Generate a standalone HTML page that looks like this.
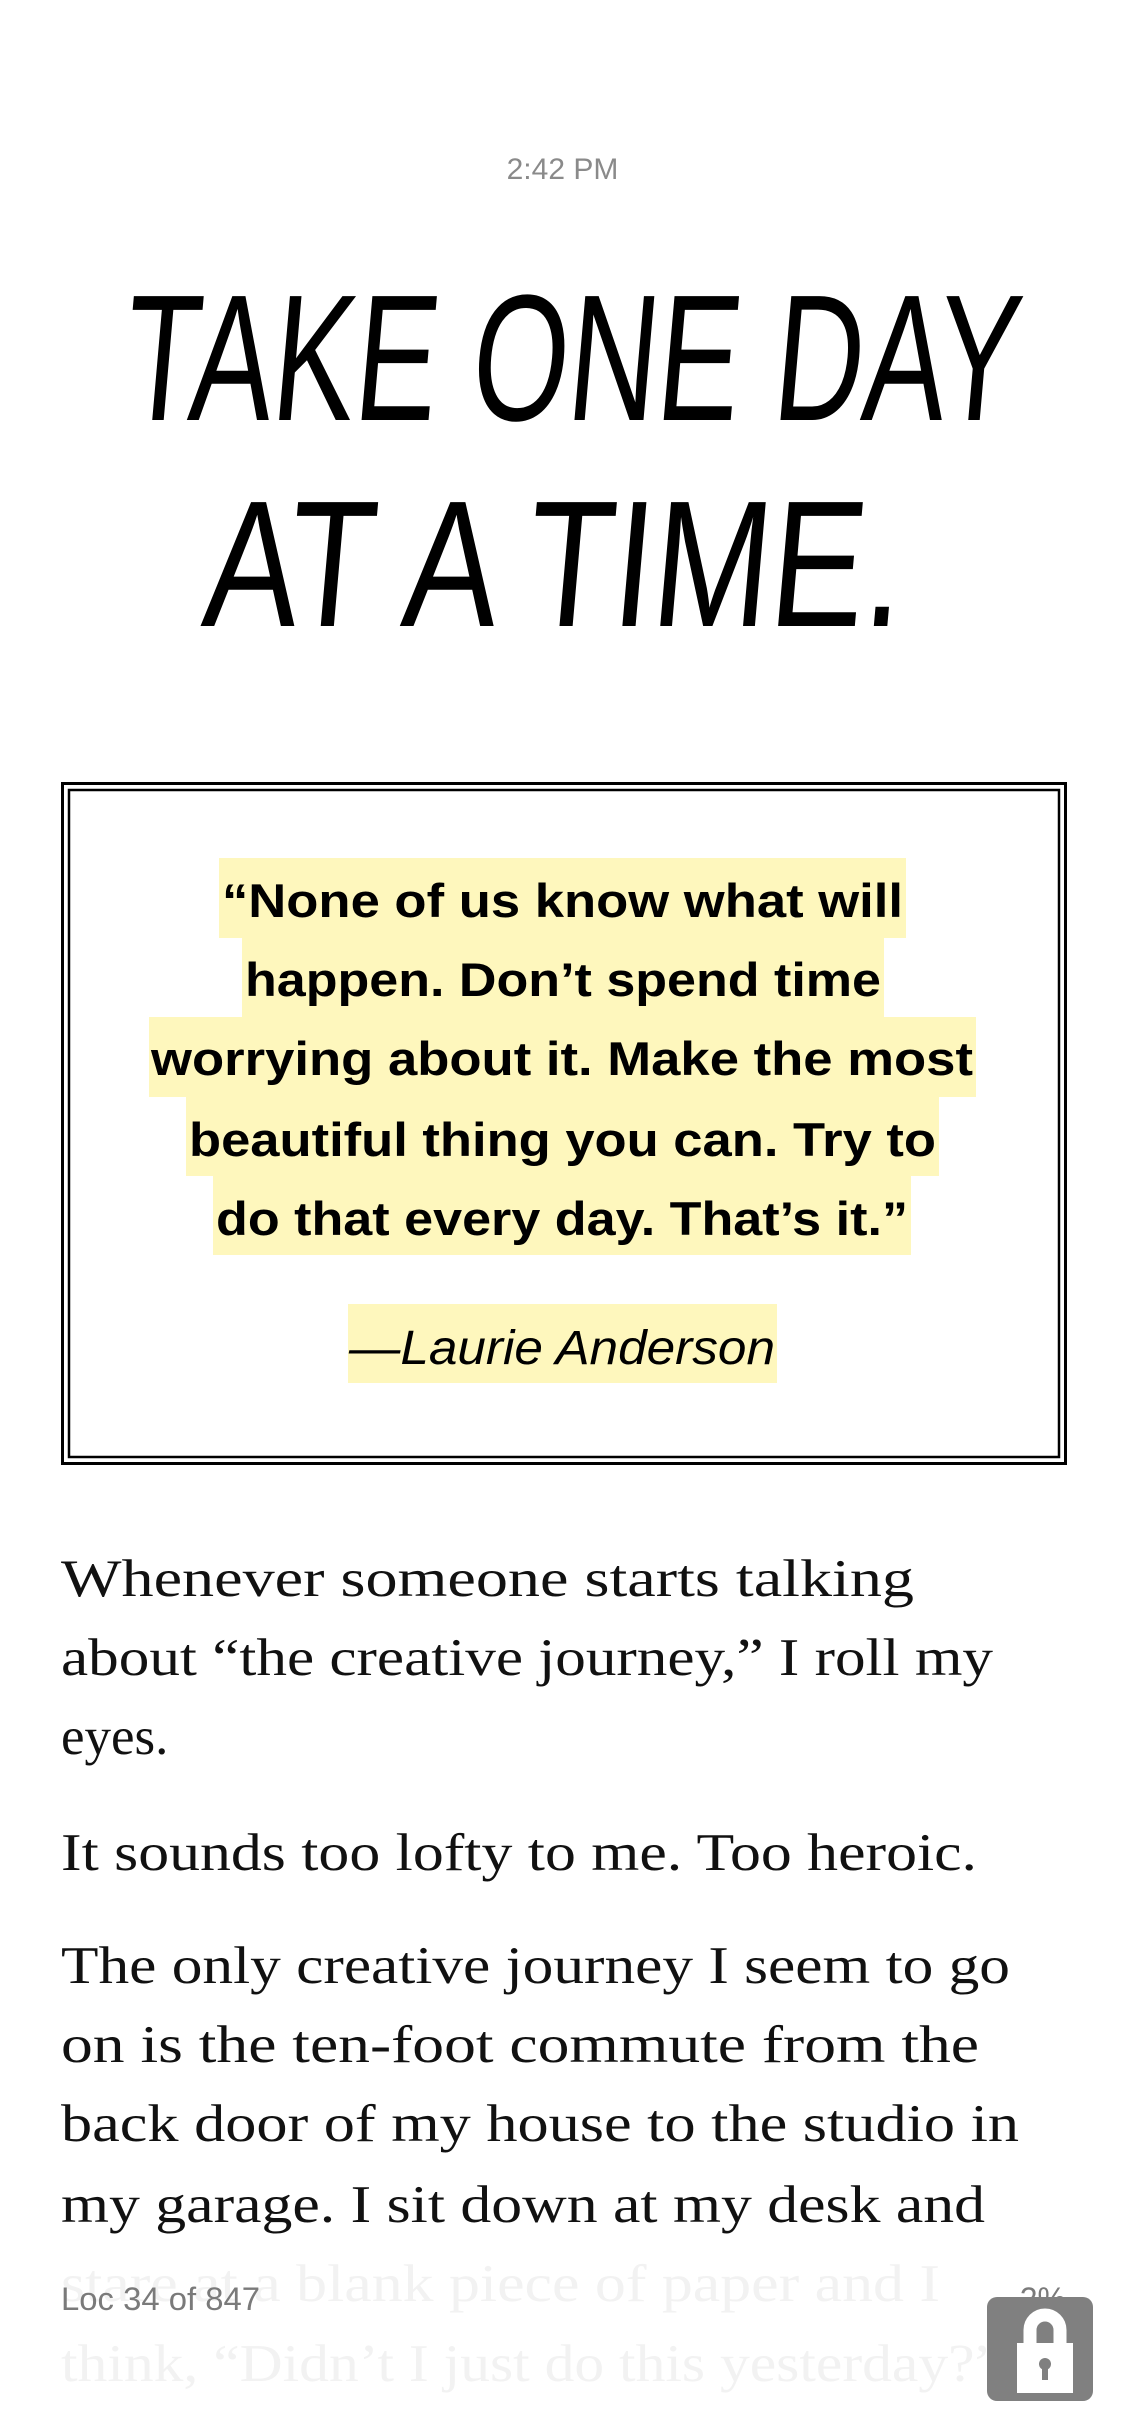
<!DOCTYPE html>
<html><head><meta charset="utf-8"><style>
html,body{margin:0;padding:0;background:#fff;width:1125px;height:2436px;overflow:hidden}
svg{display:block}
</style></head><body>
<svg width="1125" height="2436" viewBox="0 0 1125 2436" xmlns="http://www.w3.org/2000/svg">
<rect width="1125" height="2436" fill="#fff"/>
<text x="562.5" y="179" text-anchor="middle" font-family="Liberation Sans, sans-serif" font-size="30" fill="#8a8a8a">2:42 PM</text>

<g font-family="Liberation Sans Narrow, Liberation Sans, sans-serif" font-size="180" fill="#000">
<text x="120" y="420" textLength="895" lengthAdjust="spacingAndGlyphs" transform="skewX(-5) translate(37 0)">TAKE ONE DAY</text>
<text x="200" y="626" textLength="700" lengthAdjust="spacingAndGlyphs" transform="skewX(-5) translate(55 0)">AT A TIME.</text>
</g>

<rect x="62.5" y="783.5" width="1003" height="680" fill="none" stroke="#000" stroke-width="3"/>
<rect x="69" y="790" width="990" height="667" fill="none" stroke="#000" stroke-width="2.5"/>

<g fill="#fef7bd">
<rect x="219" y="858" width="687" height="80"/>
<rect x="242" y="938" width="642" height="80"/>
<rect x="149" y="1017" width="827" height="80"/>
<rect x="186" y="1096" width="753" height="80"/>
<rect x="213" y="1175" width="698" height="80"/>
<rect x="348" y="1304" width="429" height="79"/>
</g>
<g font-family="Liberation Sans, sans-serif" font-weight="bold" font-size="47" fill="#000">
<text x="222" y="917" textLength="681" lengthAdjust="spacingAndGlyphs">“None of us know what will</text>
<text x="245" y="996" textLength="636" lengthAdjust="spacingAndGlyphs">happen. Don’t spend time</text>
<text x="151" y="1075" textLength="822" lengthAdjust="spacingAndGlyphs">worrying about it. Make the most</text>
<text x="189" y="1156" textLength="747" lengthAdjust="spacingAndGlyphs">beautiful thing you can. Try to</text>
<text x="216" y="1235" textLength="692" lengthAdjust="spacingAndGlyphs">do that every day. That’s it.”</text>
</g>
<text x="349" y="1364" textLength="426" lengthAdjust="spacingAndGlyphs" font-family="Liberation Sans, sans-serif" font-style="italic" font-size="48" fill="#000">—Laurie Anderson</text>

<g font-family="Liberation Serif, serif" font-size="53" fill="#111">
<text x="61" y="1596" textLength="853" lengthAdjust="spacingAndGlyphs">Whenever someone starts talking</text>
<text x="61" y="1675" textLength="932" lengthAdjust="spacingAndGlyphs">about “the creative journey,” I roll my</text>
<text x="61" y="1754">eyes.</text>
<text x="61" y="1870" textLength="916" lengthAdjust="spacingAndGlyphs">It sounds too lofty to me. Too heroic.</text>
<text x="61" y="1983" textLength="949" lengthAdjust="spacingAndGlyphs">The only creative journey I seem to go</text>
<text x="61" y="2062" textLength="918" lengthAdjust="spacingAndGlyphs">on is the ten-foot commute from the</text>
<text x="61" y="2141" textLength="958" lengthAdjust="spacingAndGlyphs">back door of my house to the studio in</text>
<text x="61" y="2222" textLength="924" lengthAdjust="spacingAndGlyphs">my garage. I sit down at my desk and</text>
</g>
<g font-family="Liberation Serif, serif" font-size="53" fill="#f2f2f2">
<text x="61" y="2301" textLength="879" lengthAdjust="spacingAndGlyphs">stare at a blank piece of paper and I</text>
<text x="61" y="2381" textLength="940" lengthAdjust="spacingAndGlyphs">think, “Didn’t I just do this yesterday?”</text>
</g>

<text x="61" y="2310" textLength="199" lengthAdjust="spacingAndGlyphs" font-family="Liberation Sans, sans-serif" font-size="32" fill="#7a7a7a">Loc 34 of 847</text>
<text x="1066" y="2310" text-anchor="end" font-family="Liberation Sans, sans-serif" font-size="32" fill="#7a7a7a">2%</text>

<rect x="987" y="2297" width="106" height="104" rx="10" fill="#808080"/>
<path d="M1030 2345 V2330 a15 15 0 0 1 30 0 V2345" fill="none" stroke="#fff" stroke-width="13"/>
<rect x="1017" y="2343" width="56" height="50" fill="#fff"/>
<circle cx="1045" cy="2364" r="6" fill="#808080"/>
<rect x="1042" y="2364" width="6" height="16" fill="#808080"/>
</svg>
</body></html>
